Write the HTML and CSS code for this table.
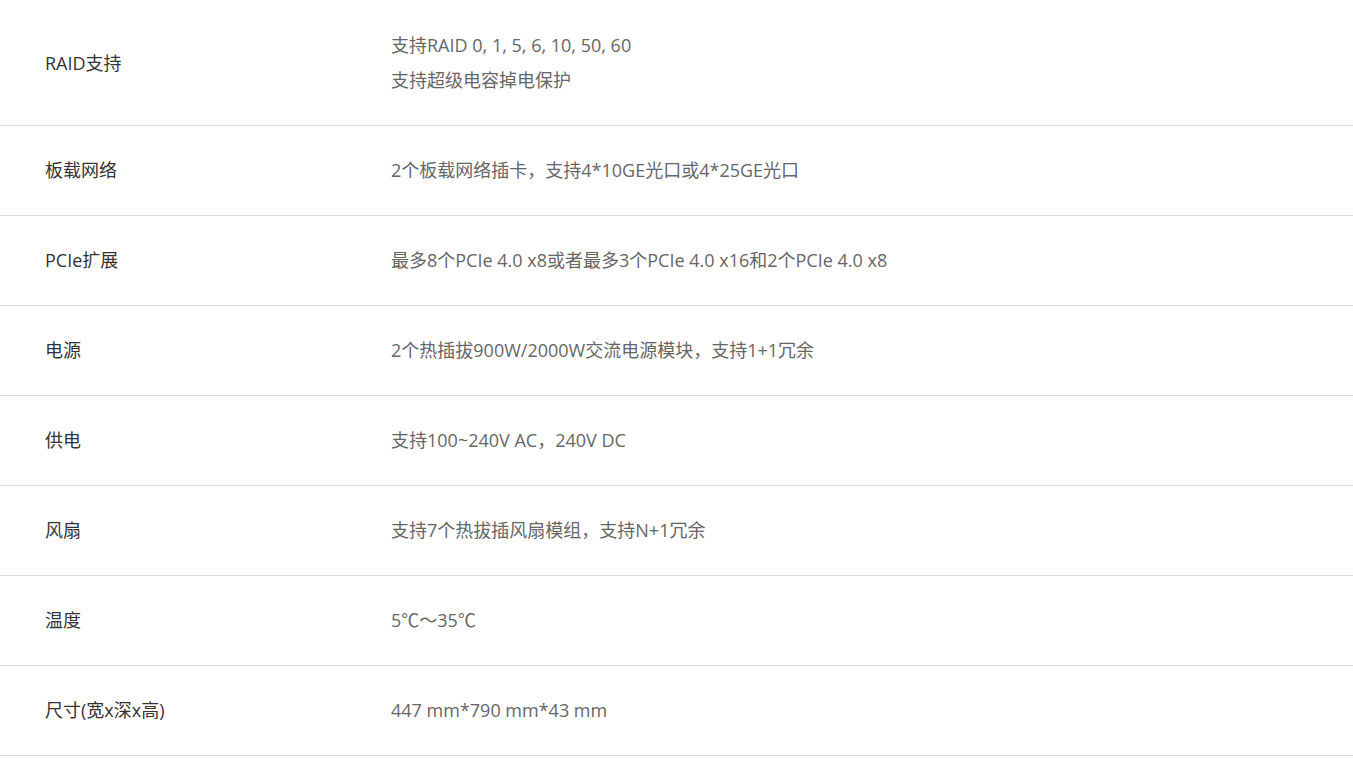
FILE: index.html
```html
<!DOCTYPE html>
<html lang="zh-CN">
<head>
  <meta charset="UTF-8" />
  <title>规格参数</title>
  <link rel="stylesheet" href="styles.css">
</head>
<body>

<section class="spec-table">
  <div class="spec-row">
    <div class="spec-name">RAID支持</div>
    <div class="spec-value">
      <p>支持RAID 0, 1, 5, 6, 10, 50, 60</p>
      <p>支持超级电容掉电保护</p>
    </div>
  </div>
  <div class="spec-row">
    <div class="spec-name">板载网络</div>
    <div class="spec-value"><p>2个板载网络插卡，支持4*10GE光口或4*25GE光口</p></div>
  </div>
  <div class="spec-row">
    <div class="spec-name">PCIe扩展</div>
    <div class="spec-value"><p>最多8个PCIe 4.0 x8或者最多3个PCIe 4.0 x16和2个PCIe 4.0 x8</p></div>
  </div>
  <div class="spec-row">
    <div class="spec-name">电源</div>
    <div class="spec-value"><p>2个热插拔900W/2000W交流电源模块，支持1+1冗余</p></div>
  </div>
  <div class="spec-row">
    <div class="spec-name">供电</div>
    <div class="spec-value"><p>支持100~240V AC，240V DC</p></div>
  </div>
  <div class="spec-row">
    <div class="spec-name">风扇</div>
    <div class="spec-value"><p>支持7个热拔插风扇模组，支持N+1冗余</p></div>
  </div>
  <div class="spec-row">
    <div class="spec-name">温度</div>
    <div class="spec-value"><p>5℃～35℃</p></div>
  </div>
  <div class="spec-row">
    <div class="spec-name">尺寸(宽x深x高)</div>
    <div class="spec-value"><p>447 mm*790 mm*43 mm</p></div>
  </div>
</section>

</body>
</html>
```

FILE: styles.css
```css
body {
  margin: 0;
  padding: 0;
  background: #fff;
  font-family: "Open Sans", "Noto Sans CJK SC", sans-serif;
  font-size: 18px;
  color: #333;
}

.spec-table {
  width: 100%;
}

.spec-row {
  display: flex;
  align-items: center;
  padding: 27px 0 27px 45px;
  border-bottom: 1px solid #ddd;
}

.spec-row:first-child {
  padding-top: 28px;
}

.spec-name {
  width: 346px;
  flex-shrink: 0;
  line-height: 35px;
  color: #333;
}

.spec-value {
  flex: 1;
  color: #666;
}

.spec-value p {
  margin: 0;
  line-height: 35px;
}
```
